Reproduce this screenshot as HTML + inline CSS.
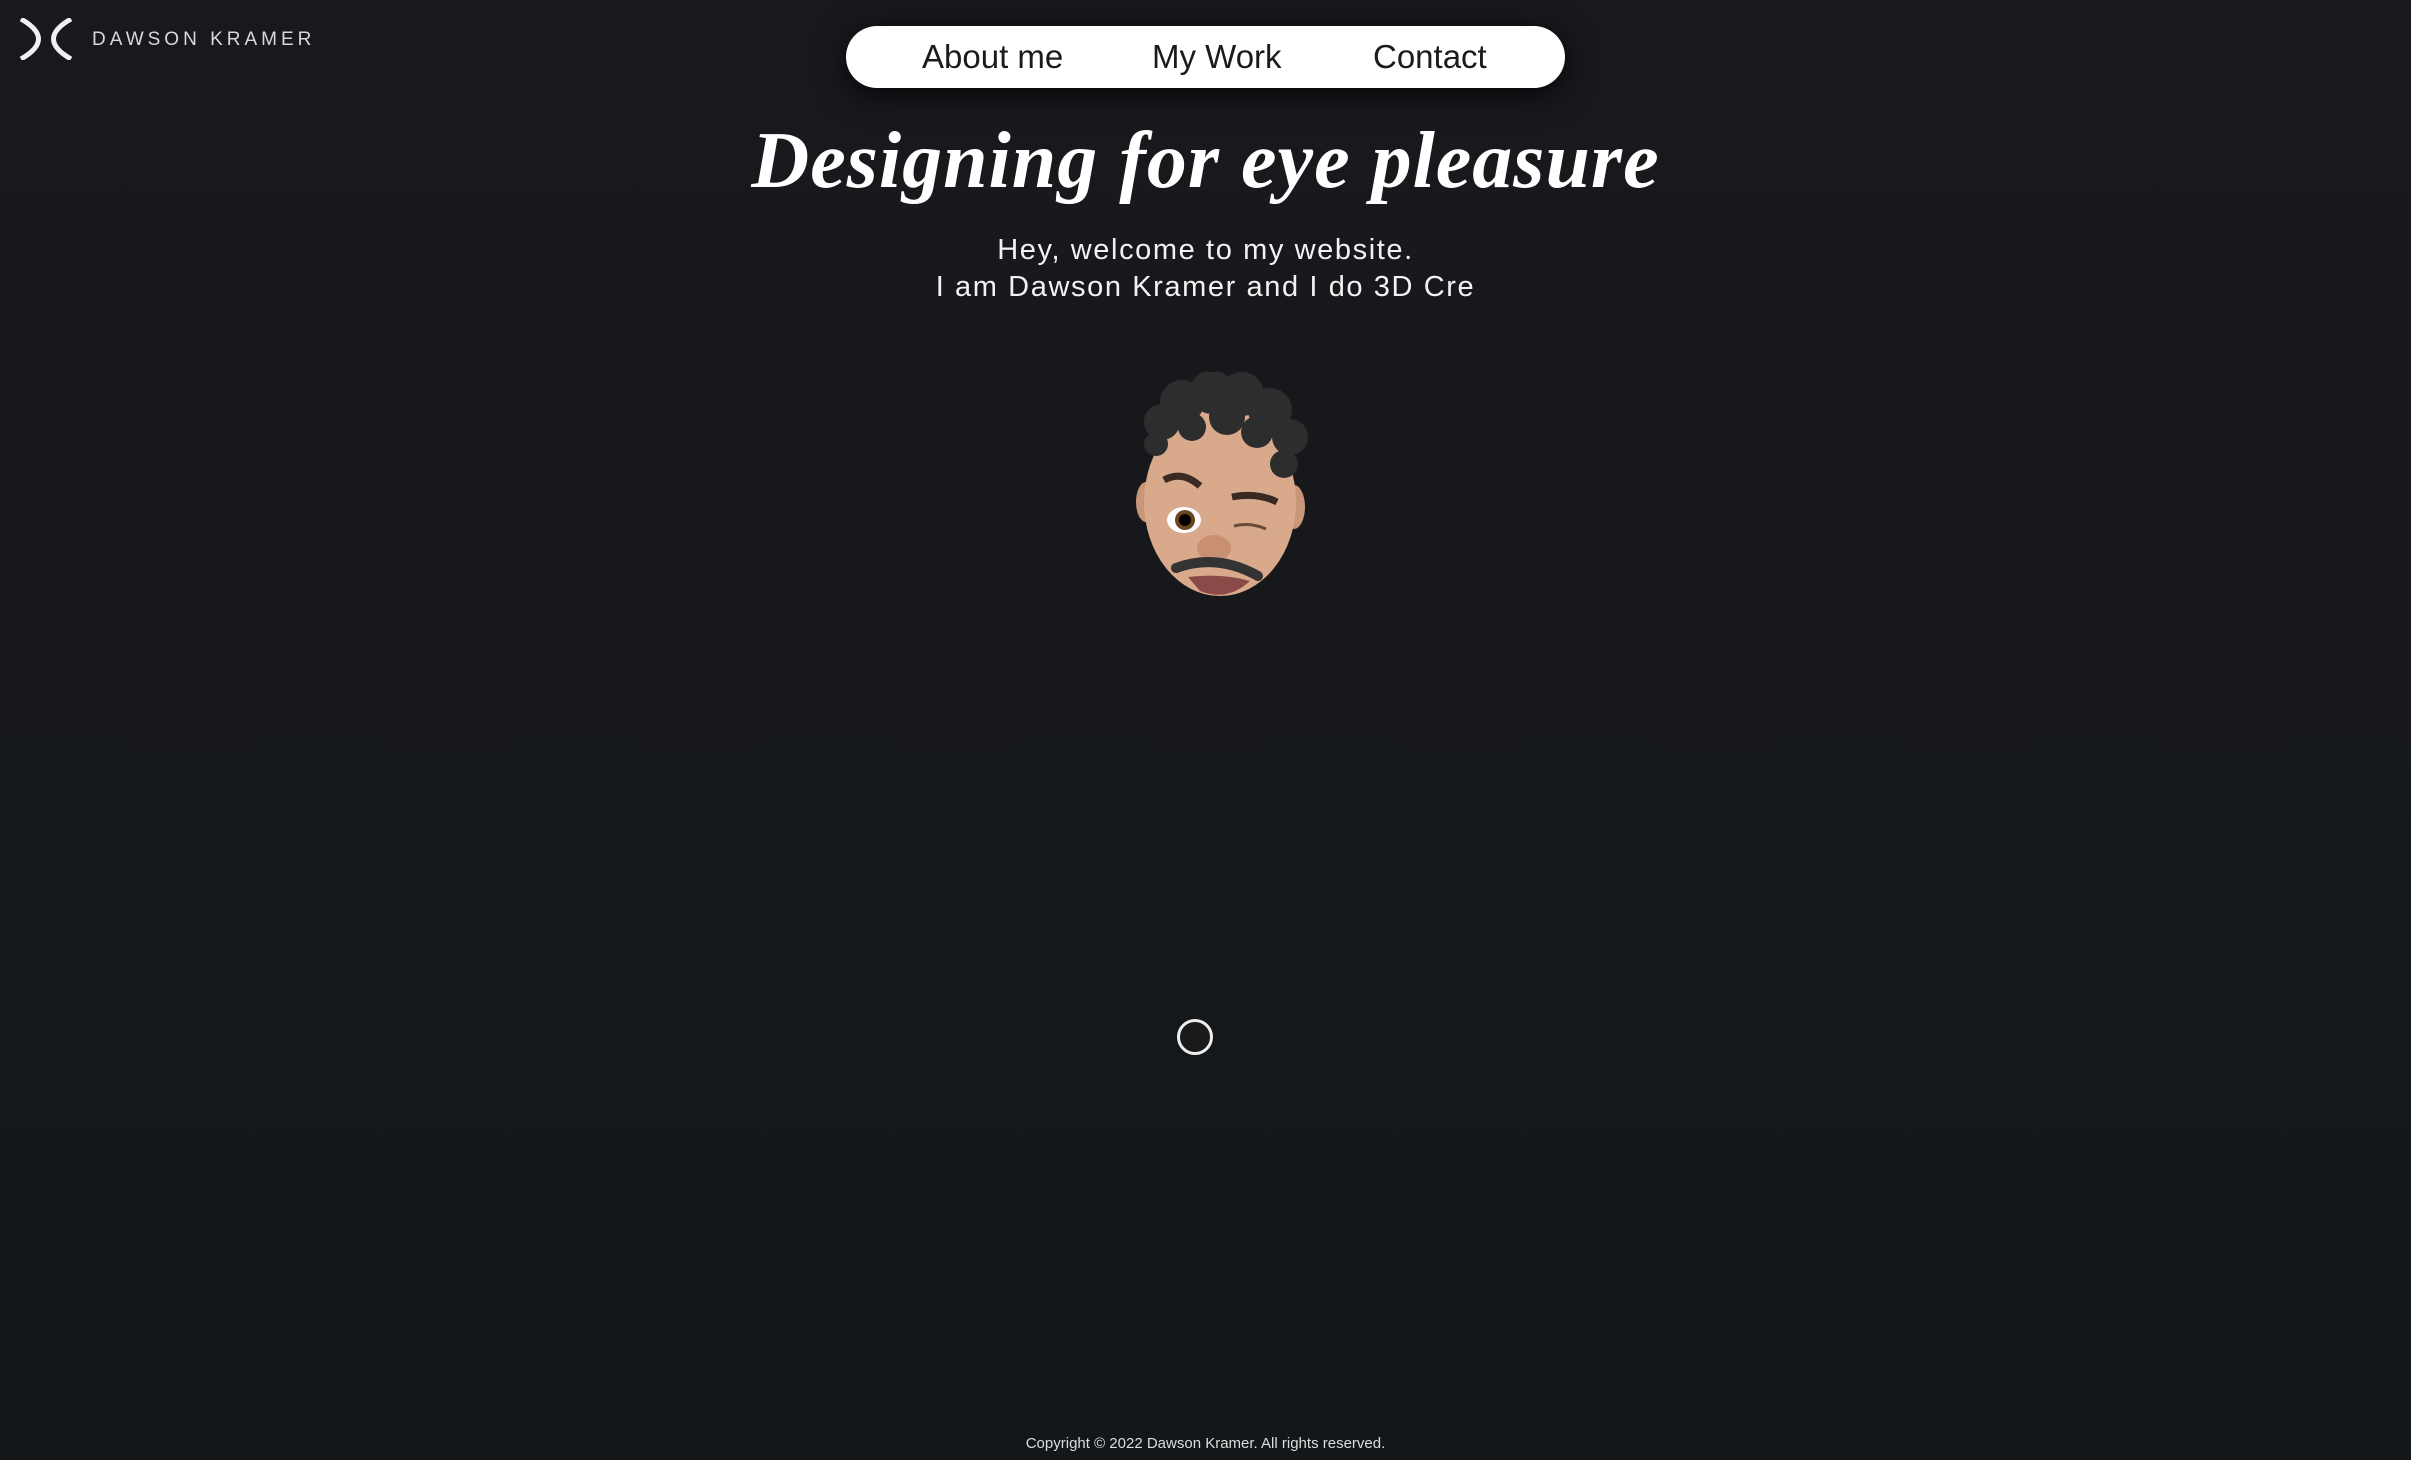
<!DOCTYPE html>
<html><head><meta charset="utf-8"><style>
html,body{margin:0;padding:0}
body{width:2411px;height:1460px;overflow:hidden;background:linear-gradient(#18191d,#13171a);font-family:"Liberation Sans",sans-serif;color:#fff;position:relative}
.logo{position:absolute;left:18px;top:18px}
.brand{position:absolute;left:92px;top:29px;font-size:19px;letter-spacing:4px;color:#d8d8d8}
.nav{position:absolute;left:846px;top:26px;width:719px;height:62px;border-radius:31px;background:#fff;box-shadow:0 6px 30px rgba(0,0,0,.8)}
.nav span{position:absolute;top:12px;font-size:33px;color:#1b1b1b}
h1{position:absolute;left:0;width:2411px;top:116px;margin:0;text-align:center;font-family:"Liberation Serif",serif;font-style:italic;font-weight:bold;font-size:80px;letter-spacing:1px}
.sub{position:absolute;left:0;width:2411px;top:232px;text-align:center;font-size:29px;line-height:37px;letter-spacing:1.6px;color:#f2f2f2}
.ring{position:absolute;left:1177px;top:1019px;width:30px;height:30px;border:3px solid #eee;border-radius:50%;background:#1a1a1a}
.foot{position:absolute;left:0;width:2411px;top:1435px;text-align:center;font-size:15px;color:#ddd}
</style></head><body>
<svg class="logo" width="56" height="42" viewBox="0 0 56 42"><path d="M3 1 Q38 21 3 41" stroke="#f0f0f0" stroke-width="5" fill="none"/><path d="M53 1 Q18 21 53 41" stroke="#f0f0f0" stroke-width="5" fill="none"/></svg>
<div class="brand">DAWSON KRAMER</div>
<div class="nav"><span style="left:76px">About me</span><span style="left:306px">My Work</span><span style="left:527px">Contact</span></div>
<h1>Designing for eye pleasure</h1>
<div class="sub">Hey, welcome to my website.<br>I am Dawson Kramer and I do 3D Cre</div>
<svg style="position:absolute;left:1132px;top:372px" width="180" height="230" viewBox="0 0 180 230">
<ellipse cx="14" cy="130" rx="10" ry="20" fill="#c9967a"/>
<ellipse cx="162" cy="135" rx="11" ry="22" fill="#c9967a"/>
<ellipse cx="88" cy="130" rx="76" ry="94" fill="#d9a98c"/>
<g fill="#2d2d2d"><circle cx="30" cy="50" r="18"/><circle cx="50" cy="30" r="22"/><circle cx="80" cy="20" r="22"/><circle cx="110" cy="22" r="22"/><circle cx="138" cy="38" r="22"/><circle cx="158" cy="65" r="18"/><circle cx="152" cy="92" r="14"/><circle cx="24" cy="72" r="12"/><circle cx="95" cy="45" r="18"/><circle cx="60" cy="55" r="14"/><circle cx="125" cy="60" r="16"/></g>
<path d="M32 108 Q50 98 68 114" stroke="#3a2a22" stroke-width="7" fill="none"/>
<path d="M100 125 Q125 120 145 130" stroke="#3a2a22" stroke-width="7" fill="none"/>
<ellipse cx="52" cy="148" rx="17" ry="13" fill="#fff"/><circle cx="53" cy="148" r="10" fill="#6a4520"/><circle cx="53" cy="148" r="6" fill="#000"/>
<path d="M102 154 Q118 150 134 157" stroke="#6b4a3a" stroke-width="3" fill="none"/>
<ellipse cx="82" cy="176" rx="17" ry="13" fill="#c98f72"/>
<path d="M44 196 Q85 181 126 204" stroke="#333" stroke-width="10" fill="none" stroke-linecap="round"/>
<path d="M56 205 Q90 201 118 209 Q95 230 68 219 Z" fill="#8a4a48"/>
</svg>
<div class="ring"></div>
<div class="foot">Copyright © 2022 Dawson Kramer. All rights reserved.</div>
</body></html>
